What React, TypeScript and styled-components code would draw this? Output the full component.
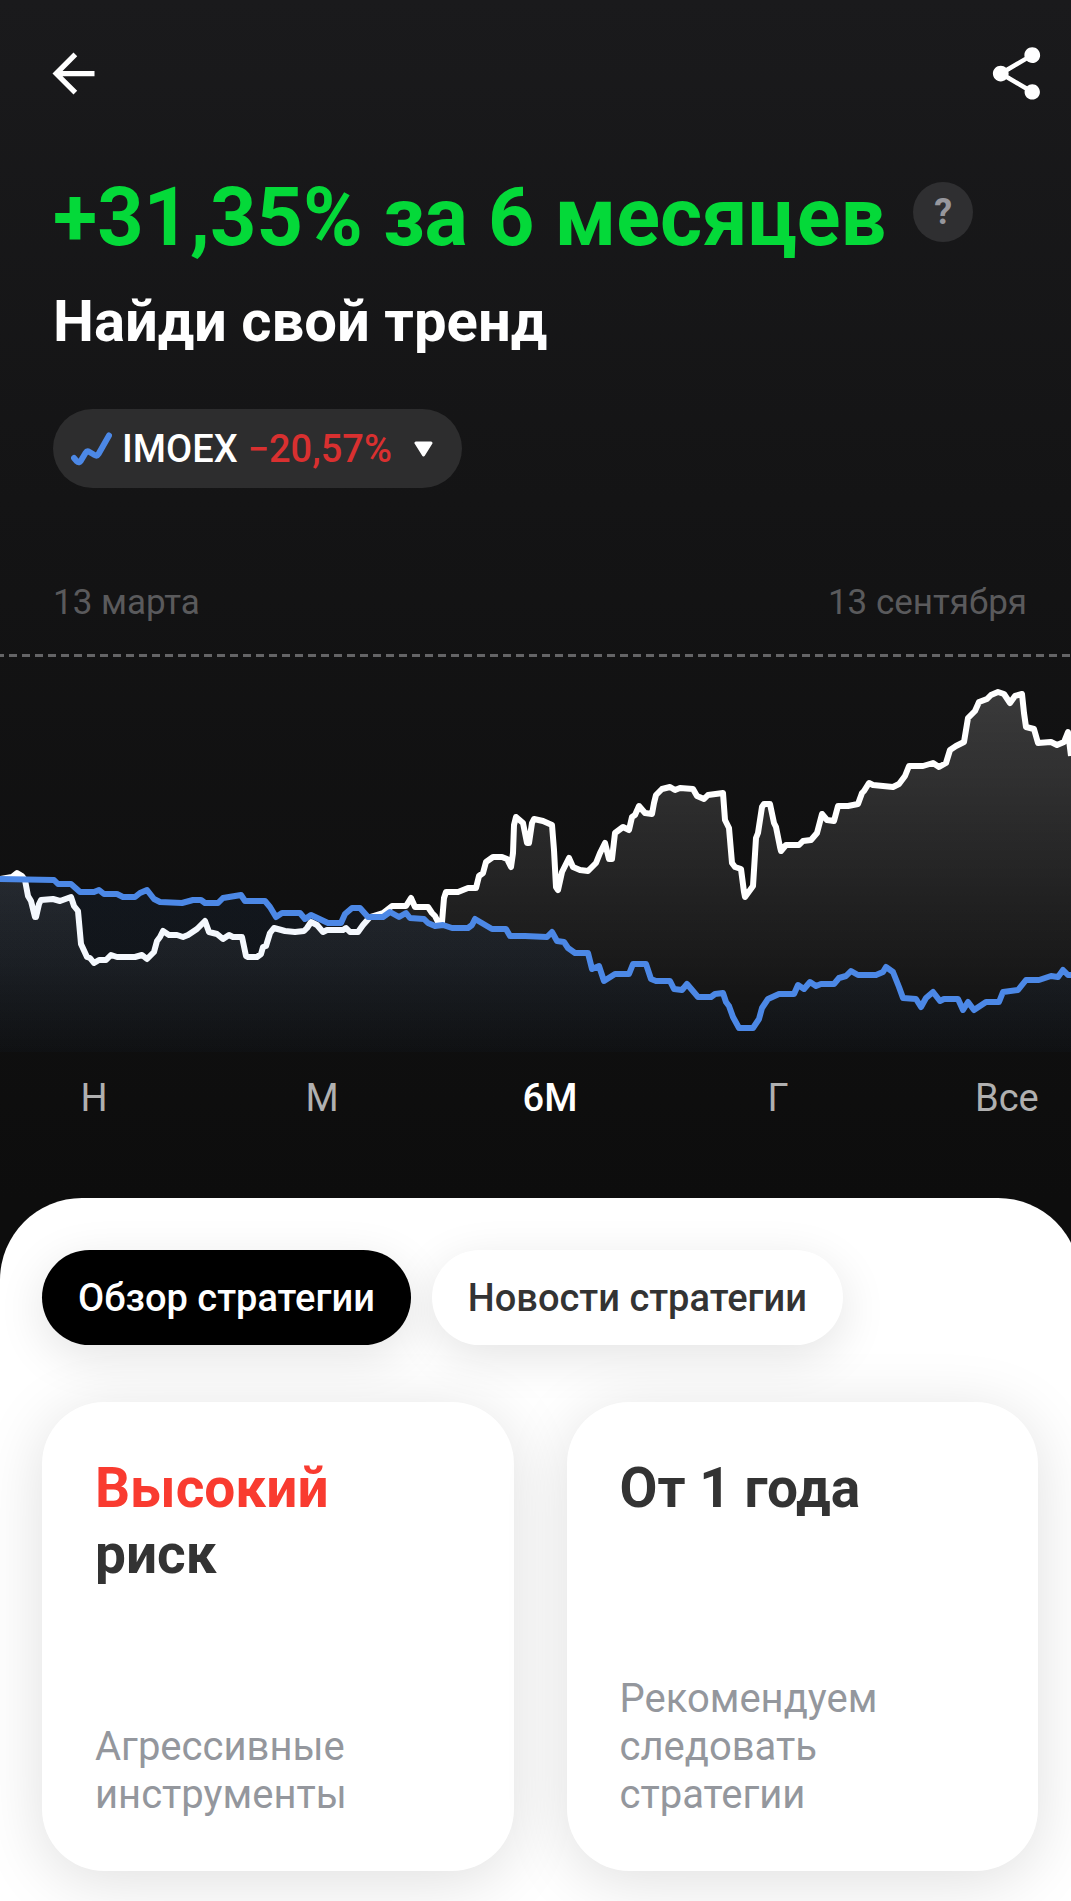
import React, { useState } from "react";
import styled, { createGlobalStyle } from "styled-components";
import { MdArrowBack, MdShare } from "react-icons/md";

const GlobalStyle = createGlobalStyle`
  *, *::before, *::after { box-sizing: border-box; }
  body {
    margin: 0;
    background: #ffffff;
    font-family: Roboto, "Noto Sans", sans-serif;
  }
  button {
    margin: 0;
    padding: 0;
    border: 0;
    background: none;
    color: inherit;
    font: inherit;
    cursor: pointer;
  }
  h1, h2, h3, p { margin: 0; }
`;

const Page = styled.main`
  overflow: hidden;
  background: linear-gradient(#1a1a1c 0, #141415 500px, #0d0d0d 1200px);
`;

const TopBar = styled.header`
  display: flex;
  justify-content: space-between;
  padding: 42px 23px 0 42px;
`;

const IconButton = styled.button`
  display: flex;
  color: #ffffff;
`;

const Summary = styled.section`
  display: flex;
  flex-direction: column;
  align-items: flex-start;
  padding: 65px 53px 0;
`;

const ReturnRow = styled.div`
  display: flex;
  align-items: flex-start;
  gap: 27px;
`;

const ReturnValue = styled.h1`
  color: #04d939;
  font-size: 81px;
  font-weight: 700;
  line-height: 96px;
  white-space: nowrap;
`;

const HelpButton = styled.button`
  flex: none;
  width: 60px;
  height: 60px;
  margin-top: 12px;
  border-radius: 50%;
  background: #2f2f31;
  color: #97979d;
  font-size: 36px;
  font-weight: 700;
  line-height: 60px;
`;

const StrategyName = styled.h2`
  margin-top: 21px;
  color: #ffffff;
  font-size: 58px;
  font-weight: 700;
  line-height: 68px;
`;

const IndexPill = styled.button`
  display: flex;
  align-items: center;
  height: 79px;
  margin-top: 54px;
  padding: 0 29px 0 18px;
  border-radius: 40px;
  background: #2d2d2e;
  color: #ffffff;
  font-size: 38px;
  font-weight: 500;
  line-height: 46px;
`;

const IndexName = styled.span`
  margin: 0 10px;
`;

const IndexChange = styled.span`
  margin-right: 22px;
  color: #d93030;
`;

const DateRange = styled.div`
  display: flex;
  justify-content: space-between;
  padding: 94px 44px 30px 53px;
  color: #5a5a5c;
  font-size: 35px;
  line-height: 42px;
`;

const ChartSvg = styled.svg`
  display: block;
  width: 100%;
  height: auto;
`;

const Periods = styled.nav`
  display: flex;
  justify-content: space-between;
  padding: 23px 34px 77px 63px;
`;

const PeriodButton = styled.button<{ $active: boolean }>`
  width: 62px;
  color: ${(p) => (p.$active ? "#ffffff" : "#b0b0b0")};
  font-size: 38px;
  font-weight: ${(p) => (p.$active ? 500 : 400)};
  line-height: 46px;
  text-align: center;
  white-space: nowrap;
`;

const Sheet = styled.section`
  margin-right: -9px;
  padding: 52px 42px 30px;
  border-radius: 82px 82px 0 0;
  background: #ffffff;
`;

const Tabs = styled.div`
  display: flex;
  gap: 21px;
`;

const Tab = styled.button<{ $active: boolean }>`
  height: 95px;
  padding: 0 36px;
  border-radius: 48px;
  background: ${(p) => (p.$active ? "#000000" : "#ffffff")};
  color: ${(p) => (p.$active ? "#ffffff" : "#333333")};
  box-shadow: 0 12px 48px rgba(0, 0, 0, 0.11);
  font-size: 38px;
  font-weight: 500;
  white-space: nowrap;
`;

const Cards = styled.div`
  display: grid;
  grid-template-columns: 1fr 1fr;
  gap: 53px;
  margin-top: 57px;
`;

const Card = styled.article`
  display: flex;
  flex-direction: column;
  justify-content: space-between;
  min-height: 469px;
  padding: 53px 53px 52px;
  border-radius: 62px;
  background: #ffffff;
  box-shadow: 0 10px 64px rgba(0, 0, 0, 0.13);
`;

const CardTitle = styled.h3`
  color: #333333;
  font-size: 55px;
  font-weight: 700;
  line-height: 66px;
`;

const RiskLevel = styled.span`
  display: block;
  color: #f93b30;
`;

const CardText = styled.p`
  max-width: 300px;
  color: #94979d;
  font-size: 40px;
  line-height: 48px;
`;

const STRATEGY_LINE =
  "0,879 12,877 17,873 22,876 25,880 28,896 31,901 35,917 36,917 39,904 41,900 53,899 60,901 71,897 74,906 78,911 81,944 87,957 90,958 94,963 99,960 106,960 111,955 117,957 135,957 142,955 147,959 154,952 157,941 160,937 163,931 169,935 177,935 183,937 188,935 197,929 205,921 209,932 217,934 223,939 229,935 233,937 242,937 246,956 248,957 257,957 261,954 263,947 266,946 270,933 274,928 285,931 295,932 304,931 307,928 311,922 317,925 323,932 327,930 343,930 346,928 350,932 358,932 363,925 370,917 383,913 392,906 406,906 411,898 415,907 428,907 432,913 435,916 438,922 442,922 444,898 446,892 458,892 468,888 476,888 479,876 483,873 486,862 493,857 502,857 507,859 511,867 513,853 514,825 516,817 523,823 527,843 529,843 532,823 534,819 543,821 552,825 554,850 556,887 558,890 562,872 569,858 573,867 580,870 588,871 596,863 600,853 605,843 609,859 612,859 615,833 623,827 629,830 632,817 635,815 639,806 645,813 652,814 654,803 656,795 662,789 670,787 675,790 680,788 693,789 697,796 704,799 708,795 723,793 725,820 729,828 732,863 735,867 741,869 744,892 745,897 753,886 756,838 758,833 762,807 764,804 770,804 774,823 776,827 780,847 781,851 786,845 799,845 803,841 811,840 817,833 822,814 827,820 834,821 838,806 848,806 858,804 862,793 864,791 869,783 873,785 893,787 899,784 905,776 909,766 923,766 933,763 939,767 946,763 950,750 956,746 964,742 968,718 975,711 979,702 987,699 991,695 998,692 1004,694 1010,703 1015,696 1022,694 1024,713 1026,727 1034,729 1038,743 1051,742 1057,745 1064,742 1068,732 1071,756";

const INDEX_LINE =
  "0,879 54,880 58,884 71,884 80,892 94,892 99,890 104,894 117,894 123,897 135,897 140,893 147,890 154,899 160,902 182,903 193,900 201,900 205,903 218,903 223,898 241,895 245,901 265,901 270,907 276,917 282,913 300,913 305,919 311,915 328,923 341,923 345,914 352,908 360,908 368,917 383,917 390,912 399,917 406,913 410,918 424,919 428,923 435,926 443,925 452,928 468,928 472,925 475,919 492,929 506,929 510,936 525,936 547,937 552,932 557,941 564,942 568,948 575,953 588,953 592,969 599,966 604,981 615,974 629,974 633,964 646,964 651,979 656,981 670,981 674,989 682,990 687,984 698,997 711,997 715,994 723,993 726,1002 729,1006 733,1017 739,1028 753,1028 759,1019 762,1008 768,999 779,994 794,994 798,985 804,989 810,982 816,986 821,984 834,984 839,978 846,976 851,971 858,975 876,975 883,972 886,967 893,972 899,987 903,998 916,999 921,1007 926,998 933,992 940,1001 944,999 958,999 963,1010 968,1002 974,1010 986,1002 999,1002 1003,992 1018,990 1026,980 1039,980 1051,976 1058,977 1063,970 1068,975 1071,975";

const area = (points: string) => `0,1052 ${points} 1071,1052`;

function Chart() {
  return (
    <ChartSvg viewBox="0 654 1071 398" role="img" aria-label="Доходность стратегии и индекса IMOEX">
      <defs>
        <linearGradient id="strategyFill" gradientUnits="userSpaceOnUse" x1="0" y1="690" x2="0" y2="1052">
          <stop offset="0" stopColor="#ffffff" stopOpacity="0.17" />
          <stop offset="1" stopColor="#ffffff" stopOpacity="0" />
        </linearGradient>
        <linearGradient id="indexFill" gradientUnits="userSpaceOnUse" x1="0" y1="879" x2="0" y2="1052">
          <stop offset="0" stopColor="#3a86e8" stopOpacity="0.06" />
          <stop offset="0.5" stopColor="#3a86e8" stopOpacity="0.05" />
          <stop offset="1" stopColor="#3a86e8" stopOpacity="0.02" />
        </linearGradient>
      </defs>
      <line x1="-4" y1="655.5" x2="1071" y2="655.5" stroke="#646466" strokeWidth="3" strokeDasharray="8 5" />
      <polygon points={area(STRATEGY_LINE)} fill="url(#strategyFill)" />
      <polyline points={STRATEGY_LINE} fill="none" stroke="#ffffff" strokeWidth="6" strokeLinejoin="round" />
      <polygon points={area(INDEX_LINE)} fill="url(#indexFill)" />
      <polyline points={INDEX_LINE} fill="none" stroke="#4c88e6" strokeWidth="6" strokeLinejoin="round" />
    </ChartSvg>
  );
}

function TrendIcon() {
  return (
    <svg width="41" height="36" viewBox="0 0 41 36" fill="none" aria-hidden="true">
      <path
        d="M3 27l3 3.500q2 2 4-1l4.500-7.500q1.500-2.500 4-1l5 3q2.500 1.500 4-1L38 4.500"
        stroke="#4c88e6"
        strokeWidth="6"
        strokeLinecap="round"
        strokeLinejoin="round"
      />
    </svg>
  );
}

function CaretIcon() {
  return (
    <svg width="19" height="16" viewBox="0 0 19 16" aria-hidden="true">
      <path d="M2 2h15l-7.5 12z" fill="#ffffff" stroke="#ffffff" strokeWidth="3" strokeLinejoin="round" />
    </svg>
  );
}

const PERIODS = ["Н", "М", "6М", "Г", "Все"];
const TABS = ["Обзор стратегии", "Новости стратегии"];

export default function App() {
  const [period, setPeriod] = useState("6М");
  const [tab, setTab] = useState(TABS[0]);

  return (
    <>
      <GlobalStyle />
      <Page>
        <TopBar>
          <IconButton type="button" aria-label="Назад">
            <MdArrowBack size={63} />
          </IconButton>
          <IconButton type="button" aria-label="Поделиться">
            <MdShare size={63} />
          </IconButton>
        </TopBar>

        <Summary>
          <ReturnRow>
            <ReturnValue>+31,35% за 6 месяцев</ReturnValue>
            <HelpButton type="button">?</HelpButton>
          </ReturnRow>
          <StrategyName>Найди свой тренд</StrategyName>
          <IndexPill type="button">
            <TrendIcon />
            <IndexName>IMOEX</IndexName>
            <IndexChange>−20,57%</IndexChange>
            <CaretIcon />
          </IndexPill>
        </Summary>

        <DateRange>
          <span>13 марта</span>
          <span>13 сентября</span>
        </DateRange>
        <Chart />
        <Periods>
          {PERIODS.map((name) => (
            <PeriodButton
              key={name}
              type="button"
              $active={name === period}
              aria-pressed={name === period}
              onClick={() => setPeriod(name)}
            >
              {name}
            </PeriodButton>
          ))}
        </Periods>

        <Sheet>
          <Tabs role="tablist">
            {TABS.map((name) => (
              <Tab
                key={name}
                type="button"
                role="tab"
                $active={name === tab}
                aria-selected={name === tab}
                onClick={() => setTab(name)}
              >
                {name}
              </Tab>
            ))}
          </Tabs>
          <Cards>
            <Card>
              <CardTitle>
                <RiskLevel>Высокий</RiskLevel>
                риск
              </CardTitle>
              <CardText>Агрессивные инструменты</CardText>
            </Card>
            <Card>
              <CardTitle>От 1 года</CardTitle>
              <CardText>Рекомендуем следовать стратегии</CardText>
            </Card>
          </Cards>
        </Sheet>
      </Page>
    </>
  );
}
